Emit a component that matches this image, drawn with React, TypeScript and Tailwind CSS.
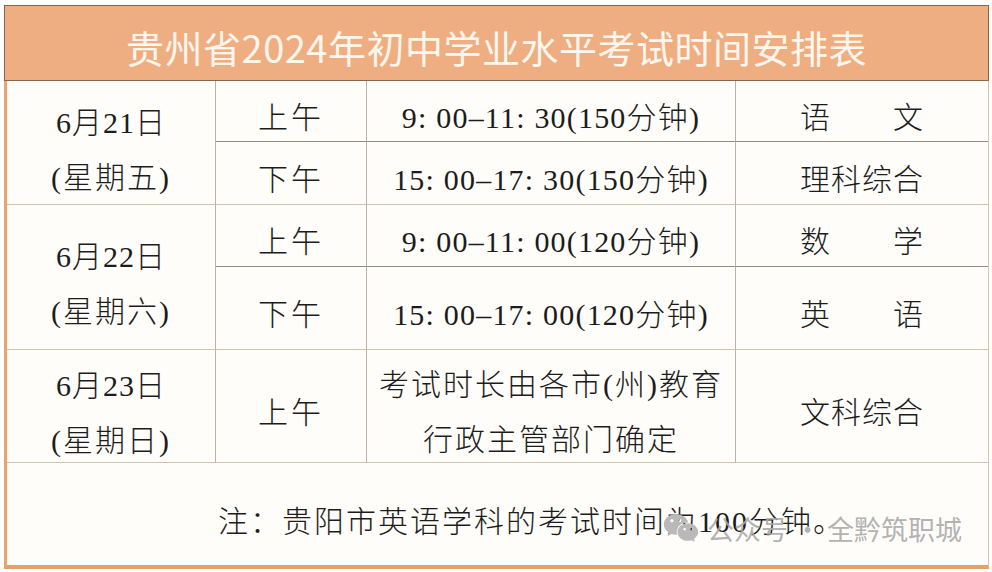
import { FaWeixin } from 'react-icons/fa';

const serif = 'font-["Liberation_Serif","Noto_Sans_CJK_SC",serif] font-light text-[#1c1c1c]';
const line = 'border-r border-b border-[#bdb2a3]';

type Slot = { period: string; time: string[]; subject: string; darkBottom?: boolean };
type Day = { date: string; week: string; slots: Slot[] };

const days: Day[] = [
  {
    date: '6月21日',
    week: '(星期五)',
    slots: [
      { period: '上午', time: ['9: 00–11: 30(150分钟)'], subject: '语　　文', darkBottom: true },
      { period: '下午', time: ['15: 00–17: 30(150分钟)'], subject: '理科综合' },
    ],
  },
  {
    date: '6月22日',
    week: '(星期六)',
    slots: [
      { period: '上午', time: ['9: 00–11: 00(120分钟)'], subject: '数　　学', darkBottom: true },
      { period: '下午', time: ['15: 00–17: 00(120分钟)'], subject: '英　　语' },
    ],
  },
  {
    date: '6月23日',
    week: '(星期日)',
    slots: [
      { period: '上午', time: ['考试时长由各市(州)教育', '行政主管部门确定'], subject: '文科综合' },
    ],
  },
];

export default function App() {
  return (
    <div className="w-[992px] h-[572px] bg-white pt-[5px] pl-[4px] pr-[3px] pb-[3px]">
      <div className="flex flex-col h-full">
        {/* title bar */}
        <div className="h-[76px] shrink-0 bg-[#efae81] border border-[#8a6446] flex items-center justify-center pt-[8px]">
          <h1 className='font-["Noto_Sans_CJK_SC",sans-serif] font-normal text-[38px] leading-none text-[#fff6ee] tracking-[0.5px]'>
            贵州省2024年初中学业水平考试时间安排表
          </h1>
        </div>

        <div className="flex-1 bg-[#fffdf9] border-l-[3px] border-l-[#eaa56c] border-r border-r-[#d6c4ab] border-b-[4px] border-b-[#e2a26b] grid grid-cols-[209px_151px_369px_1fr] grid-rows-[61px_63px_62px_83px_113px_1fr]">
          {days.map((d) => (
            <div key={d.date} className="contents">
              <div
                className={`${line} ${serif} ${d.slots.length === 2 ? 'row-span-2' : ''} flex flex-col items-center justify-center pt-[14px] text-[30px] leading-[55px] border-b-[#d3c2aa]`}
              >
                <span className="tracking-[1px]">{d.date}</span>
                <span className="tracking-[2px]">{d.week}</span>
              </div>
              {d.slots.map((s, i) => {
                const bottom = s.darkBottom ? 'border-b-[#8f8a84]' : 'border-b-[#d3c2aa]';
                return (
                  <div key={s.period + i} className="contents">
                    <div className={`${line} ${bottom} ${serif} flex items-center justify-center pt-[12px] text-[30px] tracking-[3px]`}>
                      {s.period}
                    </div>
                    <div
                      className={`${line} ${bottom} ${serif} flex flex-col items-center justify-center pt-[12px] text-[30px] leading-[55px] ${s.time.length > 1 ? 'tracking-[2px]' : 'tracking-[1.2px]'}`}
                    >
                      {s.time.map((t) => (
                        <span key={t}>{t}</span>
                      ))}
                    </div>
                    <div className={`border-b ${bottom} ${serif} flex items-center justify-center pt-[12px] text-[30px] tracking-[1px]`}>
                      {s.subject}
                    </div>
                  </div>
                );
              })}
            </div>
          ))}

          {/* note row */}
          <div className="col-span-4 relative flex items-center pl-[211px] pt-[14px]">
            <p className={`${serif} text-[30px] tracking-[2px]`}>注：贵阳市英语学科的考试时间为100分钟。</p>
            {/* watermark overlay */}
            <div className="absolute left-[656px] top-[49px] flex items-center gap-[8px] text-[#a9a9a9]/90">
              <FaWeixin className="w-[36px] h-[32px] text-[#b9b9b9]" />
              <span className='font-["Noto_Sans_CJK_SC",sans-serif] text-[27px] leading-none'>
                公众号 · 全黔筑职城
              </span>
            </div>
          </div>
        </div>
      </div>
    </div>
  );
}
